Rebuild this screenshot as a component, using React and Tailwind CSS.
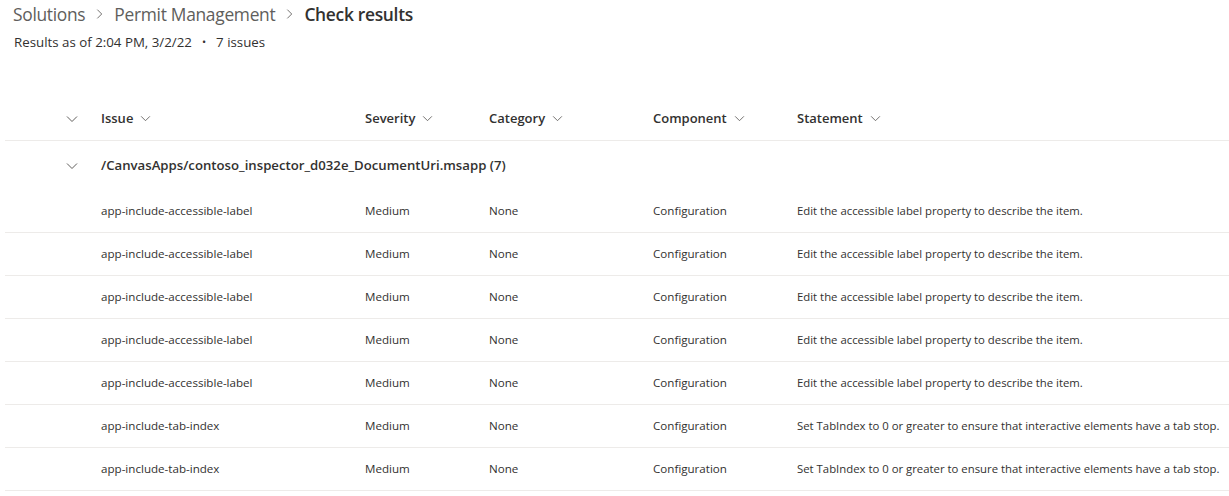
import React from "react";

const Chev = ({ className = "" }) => (
  <svg viewBox="0 0 12 8" className={className} fill="none" stroke="currentColor" strokeWidth="1">
    <polyline points="1,1.5 6,6.5 11,1.5" />
  </svg>
);

const RightChev = () => (
  <svg viewBox="0 0 8 12" className="w-[7px] h-[12px] text-[#605e5c] mx-[11px]" fill="none" stroke="currentColor" strokeWidth="1">
    <polyline points="1.5,1 6.5,6 1.5,11" />
  </svg>
);

const rows = [
  ["app-include-accessible-label", "Edit the accessible label property to describe the item."],
  ["app-include-accessible-label", "Edit the accessible label property to describe the item."],
  ["app-include-accessible-label", "Edit the accessible label property to describe the item."],
  ["app-include-accessible-label", "Edit the accessible label property to describe the item."],
  ["app-include-accessible-label", "Edit the accessible label property to describe the item."],
  ["app-include-tab-index", "Set TabIndex to 0 or greater to ensure that interactive elements have a tab stop."],
  ["app-include-tab-index", "Set TabIndex to 0 or greater to ensure that interactive elements have a tab stop."],
];

const cols = "grid grid-cols-[96px_264px_124px_164px_144px_1fr]";

export default function App() {
  return (
    <div className="w-[1229px] h-[496px] bg-white text-[#323130] overflow-hidden" style={{ fontFamily: '"Open Sans", "Noto Sans", sans-serif' }}>
      <div className="pl-[13px] pt-[1px]">
        <div className="flex items-center h-[26px] text-[17.4px] tracking-[-0.3px]">
          <span className="text-[#605e5c]">Solutions</span>
          <RightChev />
          <span className="text-[#605e5c]">Permit Management</span>
          <RightChev />
          <span className="font-semibold text-[#323130]">Check results</span>
        </div>
        <div className="flex items-center h-[31px] text-[13.3px] pl-[1px]">
          <span>Results as of 2:04 PM, 3/2/22</span>
          <span className="mx-[10px] text-[11px]">•</span>
          <span>7 issues</span>
        </div>
      </div>
      <div className="ml-[5px] mt-[39px]">
        <div className={`${cols} h-[44px] items-center border-b border-[#edebe9] text-[13px] font-semibold`}>
          <div className="flex justify-end pr-[23px]"><Chev className="w-[12px] h-[8px] text-[#605e5c]" /></div>
          {["Issue", "Severity", "Category", "Component", "Statement"].map((h) => (
            <div key={h} className="flex items-center gap-[7px]">
              <span>{h}</span>
              <Chev className="w-[11px] h-[7px] text-[#605e5c]" />
            </div>
          ))}
        </div>
        <div className={`${cols} h-[49px] items-center text-[13.2px] font-semibold`}>
          <div className="flex justify-end pr-[23px]"><Chev className="w-[12px] h-[8px] text-[#605e5c]" /></div>
          <div className="col-span-5">/CanvasApps/contoso_inspector_d032e_DocumentUri.msapp (7)</div>
        </div>
        {rows.map(([issue, stmt], i) => (
          <div key={i} className={`${cols} h-[43px] items-center border-b border-[#edebe9] text-[11.6px]`}>
            <div />
            <div>{issue}</div>
            <div>Medium</div>
            <div>None</div>
            <div>Configuration</div>
            <div className="whitespace-nowrap text-[11.35px]">{stmt}</div>
          </div>
        ))}
      </div>
    </div>
  );
}
